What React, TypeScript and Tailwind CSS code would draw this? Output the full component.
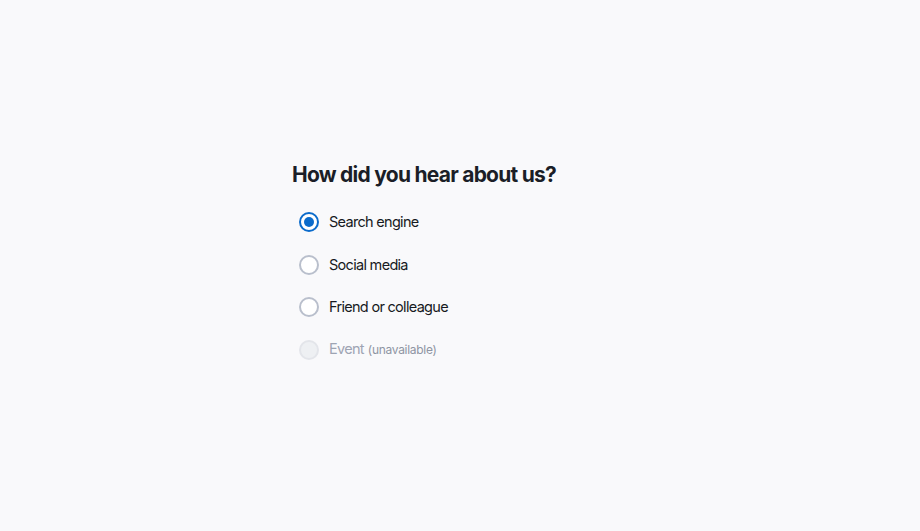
import React, { useState } from "react";

const options = [
  { label: "Search engine" },
  { label: "Social media" },
  { label: "Friend or colleague" },
  { label: "Event", disabled: true },
];

export default function App() {
  const [sel, setSel] = useState(0);
  return (
    <div
      className="min-h-[531px] w-full bg-[#f9f9fb] text-[#171a22]"
      style={{ fontFamily: "Inter, 'Noto Sans', sans-serif" }}
    >
      <div className="mx-auto w-[336px] pt-[159px]">
        <h1 className="text-[21px] font-bold leading-[32px] tracking-[-0.75px] text-[#1b1e27]">
          How did you hear about us?
        </h1>
        <div className="mt-[21px] flex flex-col gap-[22.5px] pl-[7px]">
          {options.map((o, i) => {
            const checked = sel === i;
            return (
              <label
                key={o.label}
                className={`flex items-center gap-[10px] h-[20px] ${o.disabled ? "cursor-not-allowed" : "cursor-pointer"}`}
                onClick={() => !o.disabled && setSel(i)}
              >
                {o.disabled ? (
                  <span className="flex h-[20px] w-[20px] items-center justify-center rounded-full border-2 border-[#e3e5ea] bg-[#eef0f3]" />
                ) : checked ? (
                  <span className="flex h-[20px] w-[20px] items-center justify-center rounded-full border-2 border-[#0b6bcb] bg-white">
                    <span className="h-[10px] w-[10px] rounded-full bg-[#0b6bcb]" />
                  </span>
                ) : (
                  <span className="flex h-[20px] w-[20px] items-center justify-center rounded-full border-2 border-[#b9bfcc] bg-white" />
                )}
                <span
                  className={`text-[14.5px] leading-[20px] tracking-[-0.7px] ${o.disabled ? "text-[#9ea4b3]" : "text-[#171a22]"}`}
                >
                  {o.label}
                  {o.disabled && (
                    <span className="ml-[4px] text-[12px] tracking-[-0.3px] text-[#8f95a3]">(unavailable)</span>
                  )}
                </span>
              </label>
            );
          })}
        </div>
      </div>
    </div>
  );
}
